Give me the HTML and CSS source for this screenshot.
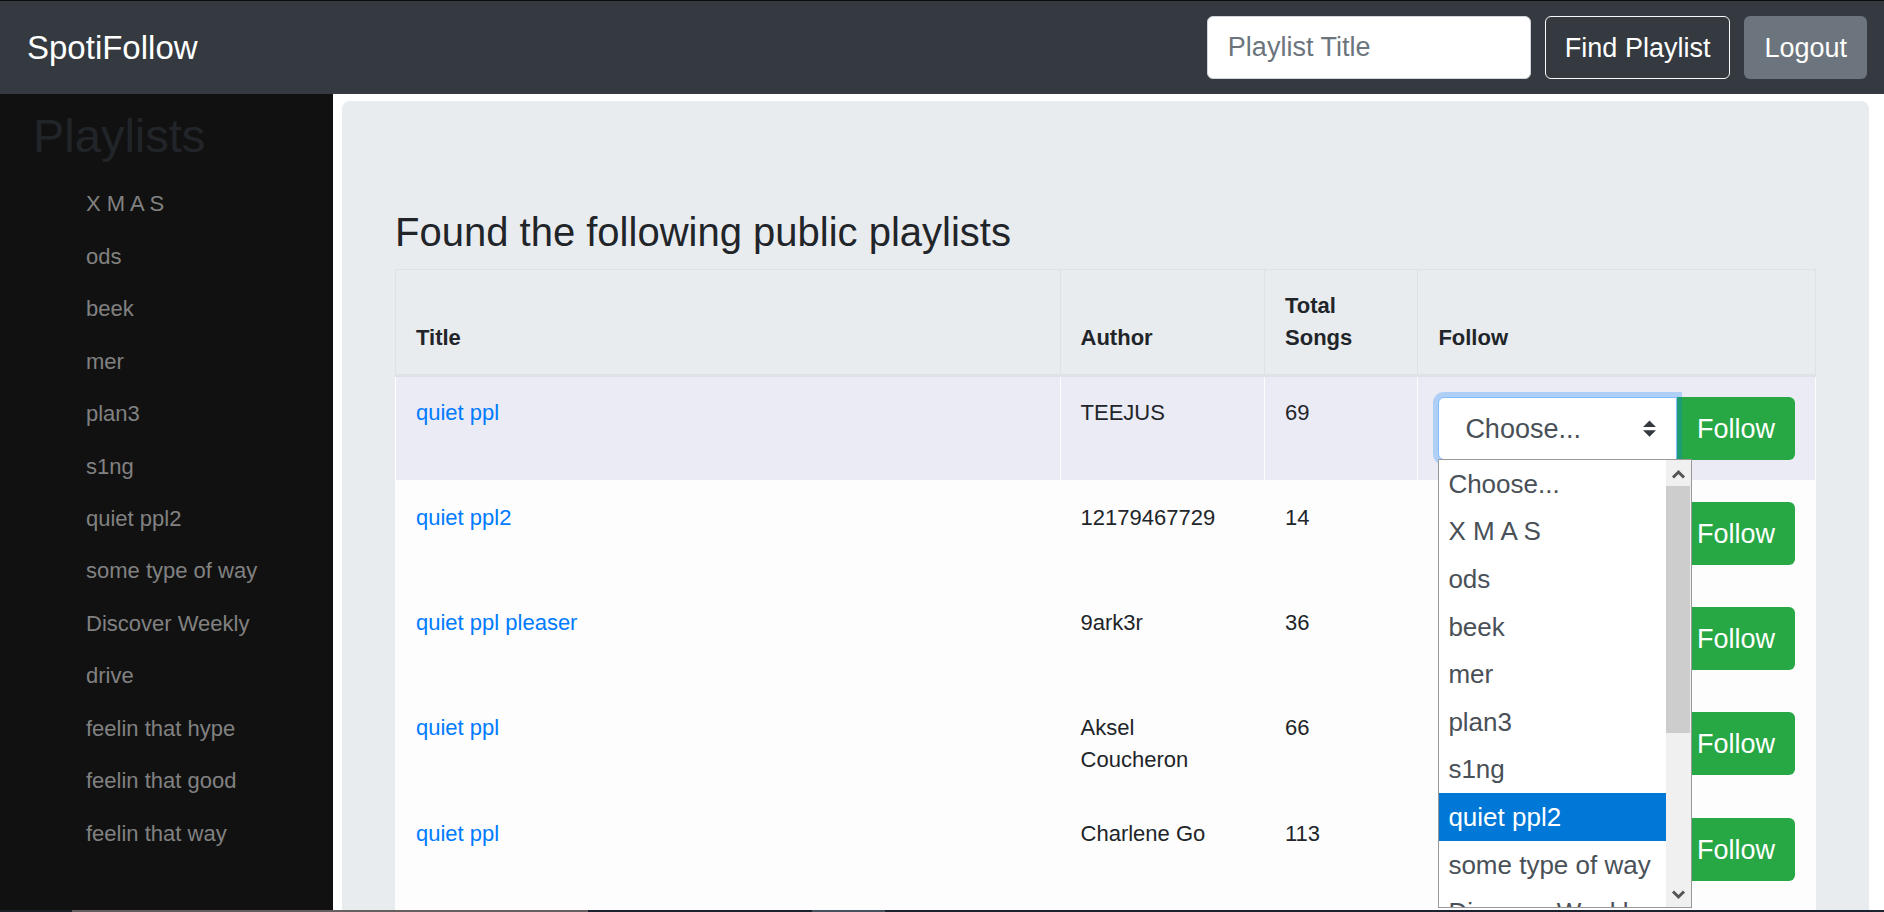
FILE: index.html
```html
<!DOCTYPE html>
<html lang="en">
<head>
<meta charset="utf-8">
<title>SpotiFollow</title>
<link rel="stylesheet" href="styles.css">
</head>
<body>
<div class="app">
  <header class="navbar">
    <a class="brand" href="#">SpotiFollow</a>
    <form class="search">
      <input class="search-input" type="text" placeholder="Playlist Title" aria-label="Playlist Title">
      <button class="btn btn-outline" type="button">Find Playlist</button>
      <button class="btn btn-secondary" type="button">Logout</button>
    </form>
  </header>
  <div class="layout">
    <nav class="sidebar">
      <h1 class="sidebar-title">Playlists</h1>
      <ul class="sidebar-list">
        <li><a href="#">X M A S</a></li>
        <li><a href="#">ods</a></li>
        <li><a href="#">beek</a></li>
        <li><a href="#">mer</a></li>
        <li><a href="#">plan3</a></li>
        <li><a href="#">s1ng</a></li>
        <li><a href="#">quiet ppl2</a></li>
        <li><a href="#">some type of way</a></li>
        <li><a href="#">Discover Weekly</a></li>
        <li><a href="#">drive</a></li>
        <li><a href="#">feelin that hype</a></li>
        <li><a href="#">feelin that good</a></li>
        <li><a href="#">feelin that way</a></li>
      </ul>
    </nav>
    <main class="content">
      <section class="panel">
        <h2 class="panel-title">Found the following public playlists</h2>
        <table class="results">
          <colgroup><col class="col-title"><col class="col-author"><col class="col-songs"><col class="col-follow"></colgroup>
          <thead>
            <tr><th scope="col">Title</th><th scope="col">Author</th><th scope="col">Total Songs</th><th scope="col">Follow</th></tr>
          </thead>
          <tbody>
            <tr class="active">
              <td><a href="#">quiet ppl</a></td><td>TEEJUS</td><td>69</td>
              <td>
                <div class="follow">
                  <select class="picker picker-open" aria-label="Playlist to merge into"><option>Choose...</option></select>
                  <button class="btn btn-success" type="button">Follow</button>
                  <div class="menu">
                    <ul class="menu-list" role="listbox" aria-label="Your playlists">
                      <li role="option">Choose...</li>
                      <li role="option">X M A S</li>
                      <li role="option">ods</li>
                      <li role="option">beek</li>
                      <li role="option">mer</li>
                      <li role="option">plan3</li>
                      <li role="option">s1ng</li>
                      <li role="option" class="selected" aria-selected="true">quiet ppl2</li>
                      <li role="option">some type of way</li>
                      <li role="option">Discover Weekly</li>
                    </ul>
                    <div class="scrollbar">
                      <svg class="arrow" viewBox="0 0 24 26" aria-hidden="true"><path d="M7 17.500L12.500 12L18 17.500" fill="none" stroke="#555" stroke-width="3"/></svg>
                      <span class="thumb"></span>
                      <svg class="arrow arrow-down" viewBox="0 0 24 26" aria-hidden="true"><path d="M7 10.500L12.500 16L18 10.500" fill="none" stroke="#555" stroke-width="3"/></svg>
                    </div>
                  </div>
                </div>
              </td>
            </tr>
            <tr>
              <td><a href="#">quiet ppl2</a></td><td>12179467729</td><td>14</td>
              <td><div class="follow"><select class="picker" aria-label="Playlist to merge into"><option>Choose...</option></select><button class="btn btn-success" type="button">Follow</button></div></td>
            </tr>
            <tr>
              <td><a href="#">quiet ppl pleaser</a></td><td>9ark3r</td><td>36</td>
              <td><div class="follow"><select class="picker" aria-label="Playlist to merge into"><option>Choose...</option></select><button class="btn btn-success" type="button">Follow</button></div></td>
            </tr>
            <tr>
              <td><a href="#">quiet ppl</a></td><td>Aksel Coucheron</td><td>66</td>
              <td><div class="follow"><select class="picker" aria-label="Playlist to merge into"><option>Choose...</option></select><button class="btn btn-success" type="button">Follow</button></div></td>
            </tr>
            <tr class="last">
              <td><a href="#">quiet ppl</a></td><td>Charlene Go</td><td>113</td>
              <td><div class="follow"><select class="picker" aria-label="Playlist to merge into"><option>Choose...</option></select><button class="btn btn-success" type="button">Follow</button></div></td>
            </tr>
          </tbody>
        </table>
      </section>
    </main>
  </div>
  <footer class="taskbar"></footer>
</div>
</body>
</html>
```
FILE: styles.css
```css
* { box-sizing: border-box; }

body {
  margin: 0;
  font: 22px/32px "Liberation Sans", Arial, sans-serif;
  color: #212529;
  background: #fff;
}

ul { list-style: none; margin: 0; padding: 0; }
a { text-decoration: none; color: #007bff; }
h1, h2 { margin: 0; font-weight: 400; }

.app {
  display: flex;
  flex-direction: column;
  height: 100vh;
  overflow: hidden;
}

/* Top bar */
.navbar {
  display: flex;
  flex: none;
  align-items: center;
  justify-content: space-between;
  padding: 15px 17px 15px 27px;
  border-top: 1px solid #0c0c0c;
  background: #343a40;
}
.brand { font-size: 33px; line-height: 48px; color: #fff; }
.search { display: flex; align-items: center; gap: 14px; }
.search-input {
  width: 324px;
  height: 63px;
  padding: 0 20px;
  border: 1px solid #ced4da;
  border-radius: 6px;
  font: inherit;
  font-size: 27px;
}
.search-input::placeholder { color: #6c757d; opacity: 1; }

.btn {
  height: 63px;
  padding: 0 19px;
  border: 1px solid transparent;
  border-radius: 6px;
  font: inherit;
  font-size: 27px;
  color: #fff;
  white-space: nowrap;
}
.btn-outline { border-color: #f8f9fa; background: transparent; }
.btn-secondary { background: #6c757d; }
.btn-success { background: #28a745; border-radius: 0 6px 6px 0; }

/* Columns below the bar */
.layout { display: flex; flex: 1; min-height: 0; }
.sidebar { flex: none; width: 333px; padding-top: 14px; background: #111; }
.sidebar-title { padding-left: 33px; font-size: 47px; line-height: 56px; }
.sidebar-list {
  display: grid;
  grid-auto-rows: 1fr;
  align-items: center;
  height: 682px;
  margin-top: 14px;
  padding-left: 86px;
}
.sidebar-list a { color: #818181; }

.content { flex: 1; min-width: 0; padding: 7px 15px 0 9px; }
.panel {
  padding: 107px 53px 85px;
  border-radius: 8px;
  background: #e9ecef;
}
.panel-title { margin-bottom: 13px; font-size: 40px; line-height: 48px; }

/* Results */
.results { width: 100%; table-layout: fixed; border-collapse: collapse; }
.col-title { width: 46.8%; }
.col-author { width: 14.4%; }
.col-songs { width: 10.8%; }
.col-follow { width: 28%; }
.results th {
  padding: 20px;
  border: 1px solid #dee2e6;
  border-bottom-width: 3px;
  text-align: left;
  vertical-align: bottom;
}
.results td {
  padding: 21px 20px 20px;
  border: 1px solid #fdfdfd;
  background: #fdfdfd;
  vertical-align: top;
}
.results .active td { background: #ebebf5; padding-top: 20px; }
.results .last td { padding-bottom: 60px; }

.follow { position: relative; display: flex; }
.picker {
  flex: 1;
  min-width: 0;
  height: 63px;
  padding: 0 26px;
  border: 1px solid #ced4da;
  border-radius: 6px 0 0 6px;
  appearance: none;
  font: inherit;
  font-size: 27px;
  color: #495057;
  background: #fff url("data:image/svg+xml,%3Csvg xmlns='http://www.w3.org/2000/svg' viewBox='0 0 4 5'%3E%3Cpath fill='%23343a40' d='M2 0L0 2h4zm0 5L0 3h4z'/%3E%3C/svg%3E") no-repeat right 20px center / 13px 17px;
}
.picker-open {
  position: relative;
  z-index: 1;
  border-color: #80bdff;
  box-shadow: 0 0 0 5px rgba(0, 123, 255, 0.25);
}

/* Open drop-down list */
.menu {
  position: absolute;
  top: 62px;
  left: 0;
  z-index: 2;
  display: flex;
  width: 254px;
  height: 449px;
  overflow: hidden;
  border: 1px solid #999;
  background: #fff;
}
.menu-list {
  display: grid;
  flex: 1;
  grid-auto-rows: 1fr;
  height: 476px;
  font-size: 26px;
  color: #495057;
}
.menu-list li {
  display: flex;
  align-items: center;
  padding-left: 9px;
  white-space: nowrap;
}
.menu-list .selected { background: #0078d7; color: #fff; }
.scrollbar { display: flex; flex: none; flex-direction: column; width: 25px; background: #f0f0f0; }
.arrow { flex: none; width: 24px; height: 26px; }
.arrow-down { margin-top: auto; }
.thumb { height: 247px; margin-right: 1px; background: #cdcdcd; }

.taskbar {
  flex: none;
  height: 2px;
  background: linear-gradient(90deg, #1c2028 72px, #655f60 72px 588px, #1c2230 588px 812px, #465260 812px 885px, #1c2230 885px);
}
```
